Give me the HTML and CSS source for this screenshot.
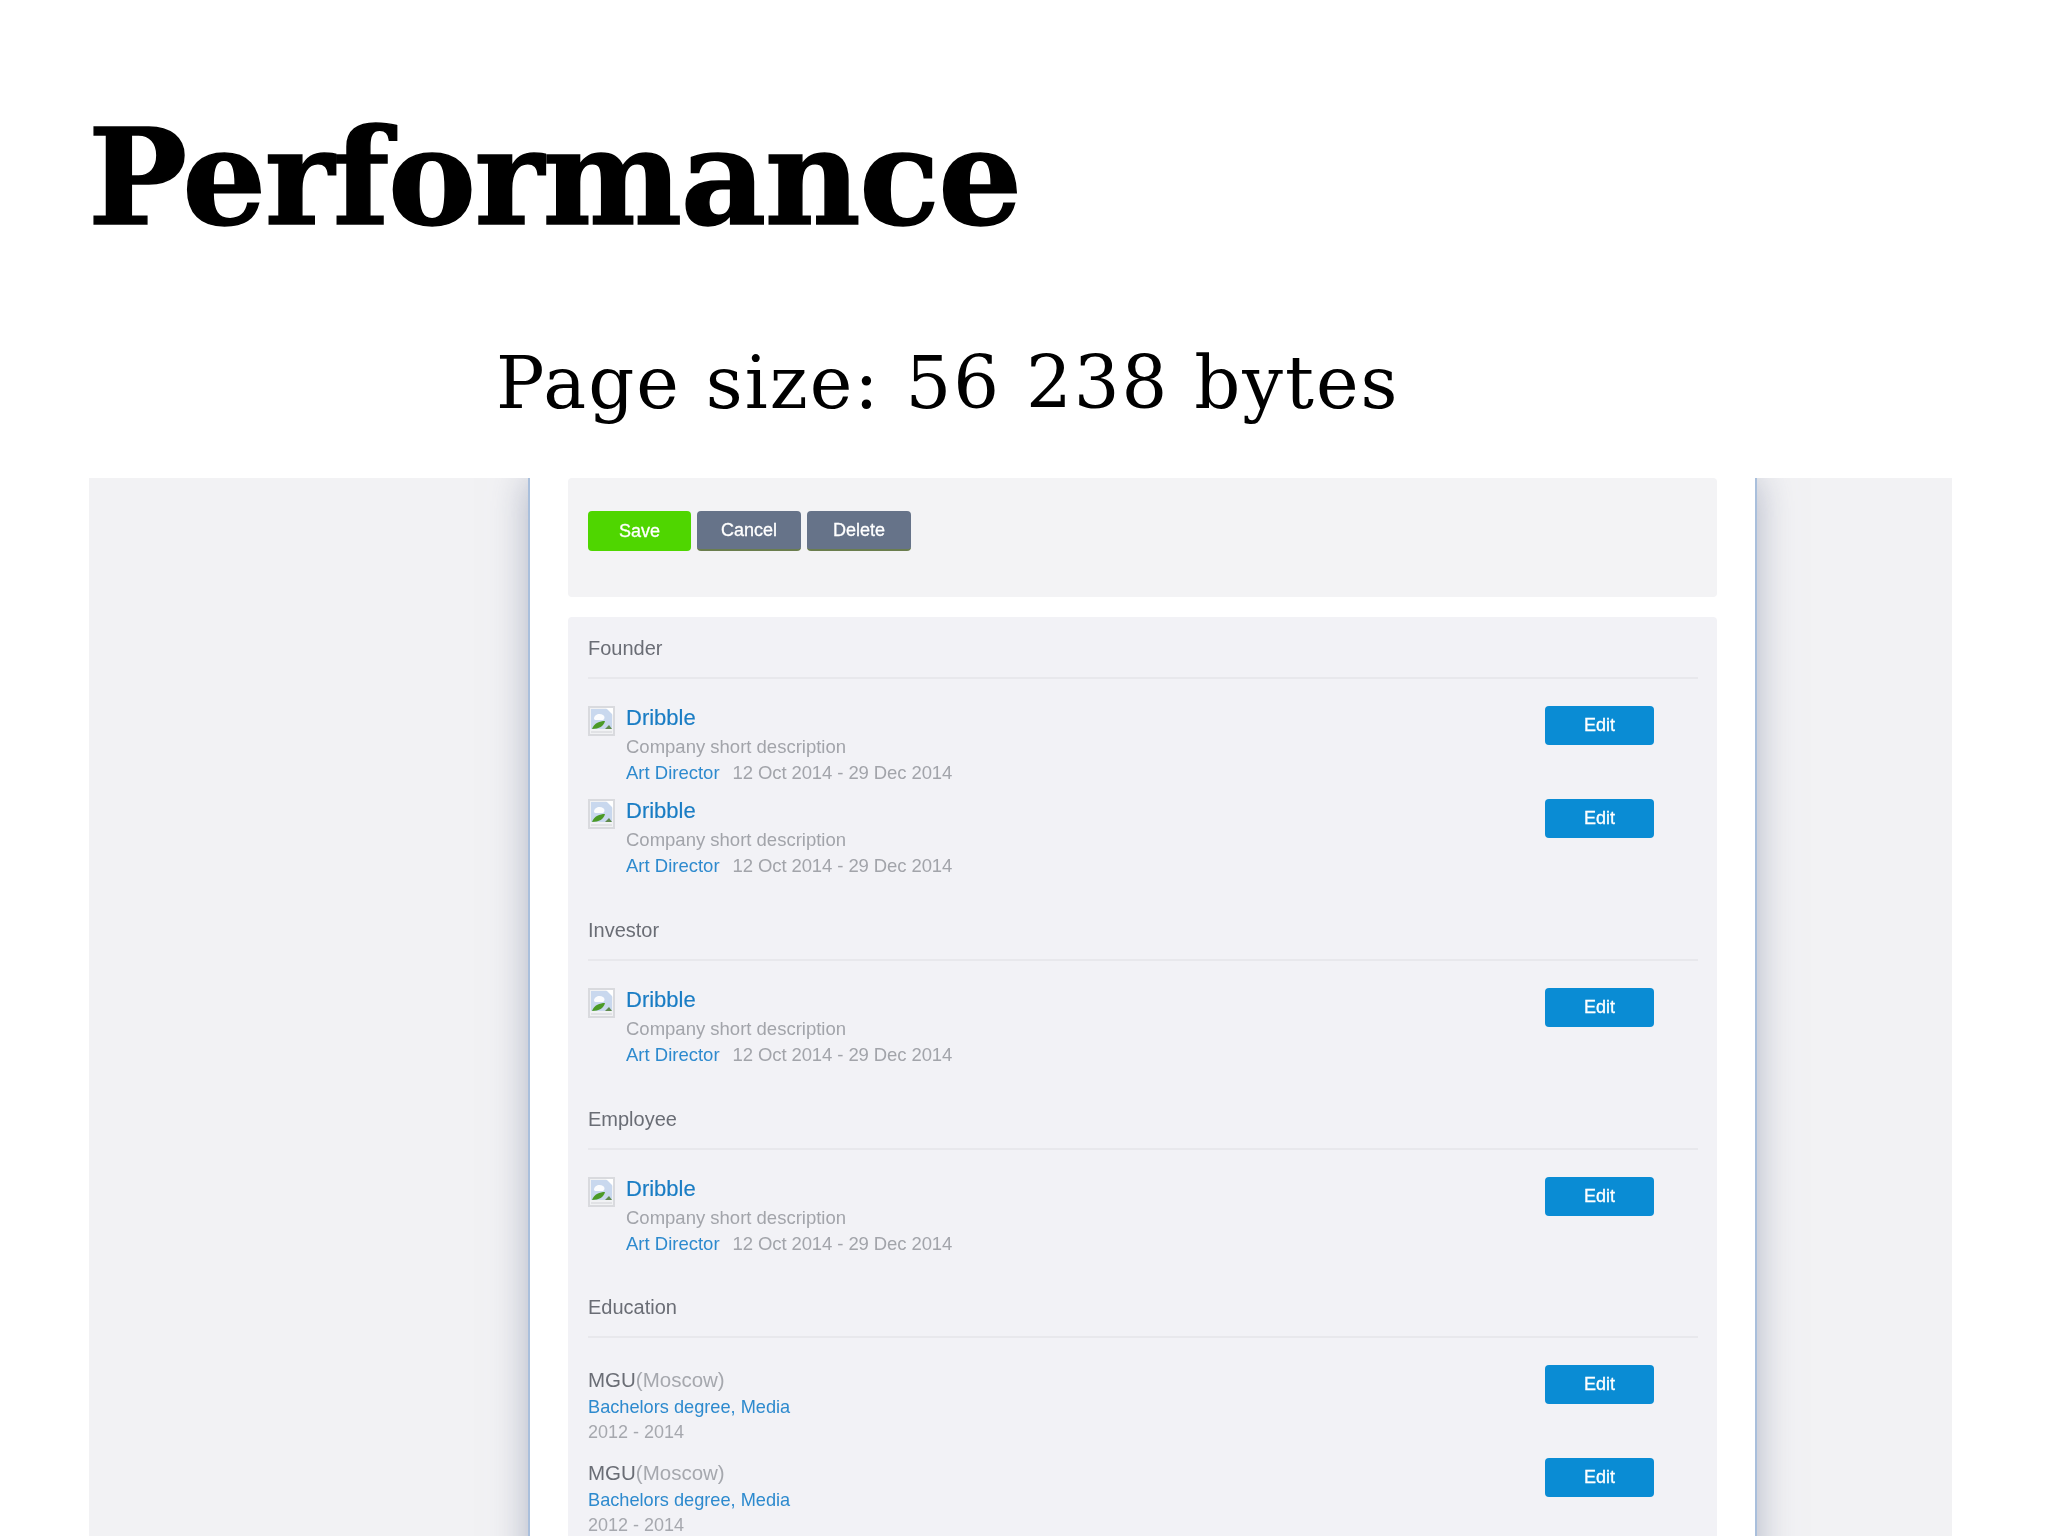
FILE: index.html
```html
<!DOCTYPE html>
<html lang="en">
<head>
    <meta charset="UTF-8">
    <title>Performance</title>
    <link rel="stylesheet" href="styles.css">
</head>
<body>
    <svg class="defs" width="0" height="0">
        <symbol id="broken" viewBox="0 0 27 30">
            <rect width="27" height="30" fill="#d9dade"/>
            <rect x="2" y="2" width="23" height="26" fill="#f1f2f4"/>
            <rect x="3" y="3" width="21" height="20" fill="#c9d8ee"/>
            <path d="M6 13c0-5 6-6 9-4 2 1 2 4 0 5H7z" fill="#fbfcfe"/>
            <path d="M18 2h7v7z" fill="#fff"/>
            <path d="M4 23c2-6 8-8 13-8-1 5-6 8-13 8z" fill="#4a9a26"/>
            <path d="M17 23l4-4 3 4z" fill="#5f8a4c"/>
            <rect x="3" y="25" width="21" height="2" fill="#e1e2e5"/>
        </symbol>
    </svg>

    <header class="slide-head">
        <h1>Performance</h1>
        <p class="page-size">Page size: 56 238 bytes</p>
    </header>

    <div class="shot">
        <div class="sheet">
            <div class="panel panel-actions">
                <button class="btn btn-save">Save</button>
                <button class="btn btn-grey">Cancel</button>
                <button class="btn btn-grey">Delete</button>
            </div>

            <div class="panel panel-list">
                <section class="group">
                    <h2>Founder</h2>
                    <div class="row">
                        <svg class="thumb"><use href="#broken"/></svg>
                        <div class="info">
                            <a class="name">Dribble</a>
                            <div class="desc">Company short description</div>
                            <div class="meta"><a>Art Director</a><span>12 Oct 2014 - 29 Dec 2014</span></div>
                        </div>
                        <button class="btn btn-edit">Edit</button>
                    </div>
                    <div class="row">
                        <svg class="thumb"><use href="#broken"/></svg>
                        <div class="info">
                            <a class="name">Dribble</a>
                            <div class="desc">Company short description</div>
                            <div class="meta"><a>Art Director</a><span>12 Oct 2014 - 29 Dec 2014</span></div>
                        </div>
                        <button class="btn btn-edit">Edit</button>
                    </div>
                </section>

                <section class="group">
                    <h2>Investor</h2>
                    <div class="row">
                        <svg class="thumb"><use href="#broken"/></svg>
                        <div class="info">
                            <a class="name">Dribble</a>
                            <div class="desc">Company short description</div>
                            <div class="meta"><a>Art Director</a><span>12 Oct 2014 - 29 Dec 2014</span></div>
                        </div>
                        <button class="btn btn-edit">Edit</button>
                    </div>
                </section>

                <section class="group">
                    <h2>Employee</h2>
                    <div class="row">
                        <svg class="thumb"><use href="#broken"/></svg>
                        <div class="info">
                            <a class="name">Dribble</a>
                            <div class="desc">Company short description</div>
                            <div class="meta"><a>Art Director</a><span>12 Oct 2014 - 29 Dec 2014</span></div>
                        </div>
                        <button class="btn btn-edit">Edit</button>
                    </div>
                </section>

                <section class="group">
                    <h2>Education</h2>
                    <div class="row">
                        <div class="info">
                            <div class="school"><b>MGU</b>(Moscow)</div>
                            <a class="degree">Bachelors degree, Media</a>
                            <div class="years">2012 - 2014</div>
                        </div>
                        <button class="btn btn-edit">Edit</button>
                    </div>
                    <div class="row">
                        <div class="info">
                            <div class="school"><b>MGU</b>(Moscow)</div>
                            <a class="degree">Bachelors degree, Media</a>
                            <div class="years">2012 - 2014</div>
                        </div>
                        <button class="btn btn-edit">Edit</button>
                    </div>
                </section>
            </div>
        </div>
    </div>
</body>
</html>
```

FILE: styles.css
```css
* {
    box-sizing: border-box;
}
html, body {
    height: 1536px;
    overflow: hidden;
}
body {
    margin: 0;
    background: #fff;
    font-family: "Liberation Sans", Arial, sans-serif;
}
.defs {
    display: block;
    height: 0;
}

/* slide title */
.slide-head {
    height: 478px;
    padding-left: 88px;
    overflow: hidden;
    font-family: "DejaVu Serif", serif;
    color: #000;
}
h1 {
    margin: 0;
    padding-top: 98px;
    font-size: 132px;
    line-height: 160px;
    font-weight: 700;
    letter-spacing: -1.5px;
    -webkit-text-stroke: 1.5px #000;
}
.page-size {
    margin: 81px 0 0 408px;
    font-size: 72px;
    line-height: 88px;
    letter-spacing: 2px;
    white-space: nowrap;
}

/* the blurry screenshot on the slide */
.shot {
    margin-left: 89px;
    width: 1863px;
    height: 1058px;
    padding-left: 439px;
    background: #f2f2f4;
    overflow: hidden;
    filter: blur(0.7px);
}
.sheet {
    width: 1229px;
    height: 1200px;
    padding: 0 38px;
    background: #fff;
    border-left: 2px solid #a9bfdc;
    border-right: 2px solid #a9bfdc;
    box-shadow: 0 0 36px rgba(130, 138, 165, 0.6);
}
.panel {
    background: #f3f3f5;
    border-radius: 4px;
}
.panel-actions {
    display: flex;
    gap: 6px;
    height: 119px;
    padding: 33px 20px 0;
}
.panel-list {
    margin-top: 20px;
    padding: 19px 19px 0 20px;
    background: #f2f2f6;
}

.btn {
    height: 40px;
    border: none;
    border-radius: 4px;
    padding: 0;
    color: #fff;
    font-family: inherit;
    font-size: 18px;
    font-weight: 400;
    -webkit-text-stroke: 0.3px #fff;
}
.btn-save {
    width: 103px;
    background: #4fd600;
}
.btn-grey {
    width: 104px;
    background: #667389;
    border-bottom: 2px solid #6a7d4e;
}
.btn-edit {
    flex: none;
    width: 109px;
    height: 39px;
    margin-right: 44px;
    background: #0a8cd4;
}

.group {
    margin-bottom: 25.8px;
}
h2 {
    margin: 0 0 27px;
    height: 43px;
    padding-bottom: 18px;
    border-bottom: 2px solid #e8e8ec;
    font-size: 20px;
    line-height: 24px;
    font-weight: 400;
    color: #6a6d75;
}
.row {
    display: flex;
    align-items: flex-start;
    height: 93px;
}
.thumb {
    flex: none;
    width: 27px;
    height: 30px;
    margin-right: 11px;
}
.info {
    flex: 1;
}
.name {
    display: block;
    margin-bottom: 4px;
    font-size: 22px;
    line-height: 24px;
    color: #1a7dc4;
    -webkit-text-stroke: 0.2px #1a7dc4;
}
.desc, .meta {
    font-size: 18.5px;
    line-height: 26px;
    color: #a2a4aa;
}
.meta span {
    letter-spacing: -0.1px;
}
.meta a {
    margin-right: 13px;
    color: #2d8ace;
}
.school {
    font-size: 20.5px;
    line-height: 29px;
    color: #a6a8ae;
}
.school b {
    font-weight: 400;
    color: #6a6d75;
}
.degree {
    display: block;
    font-size: 18.2px;
    line-height: 26px;
    color: #2d8ace;
}
.years {
    font-size: 18px;
    line-height: 24px;
    color: #a6a8ae;
}
```
